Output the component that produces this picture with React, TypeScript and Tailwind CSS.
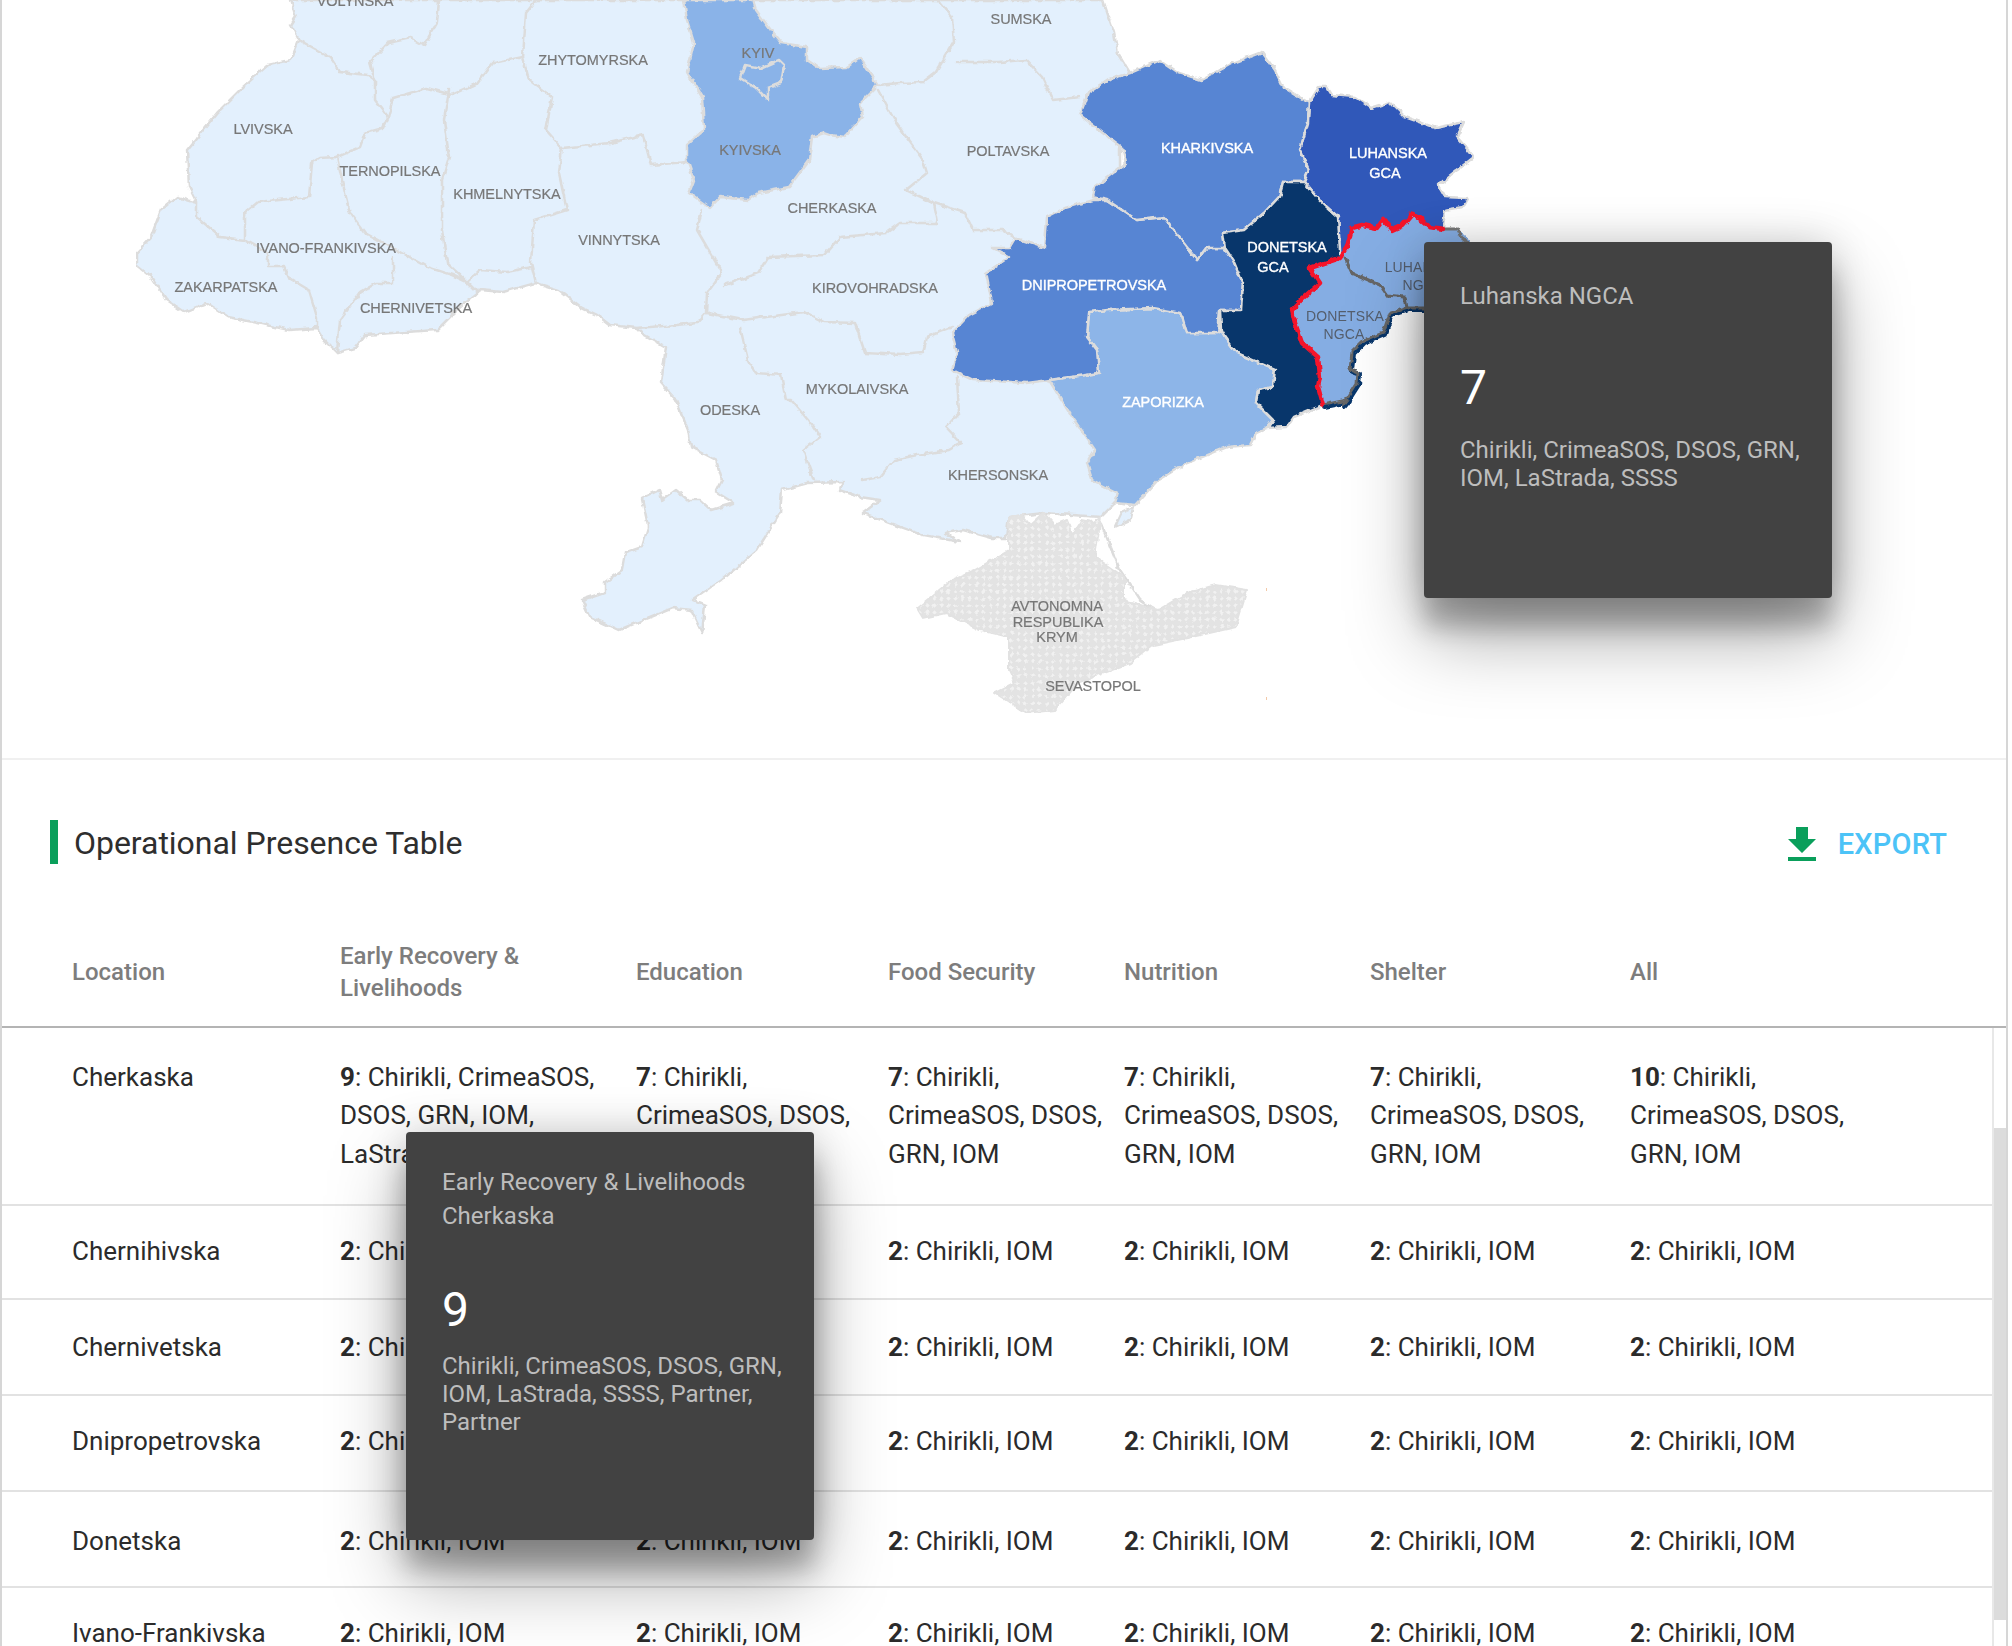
const LIGHT = "#e3f0fd";
const LINE = "#dcdcdc";

const base =
  "291,0 296,17 291,25 299,40 291,60 268,65 243,87 217,113 187,150 189,187 197,203 177,197 161,210 151,237 136,253 136,265 151,277 166,300 184,312 207,303 228,317 258,323 289,330 317,328 324,340 337,353 355,348 365,335 406,332 437,330 452,315 470,298 480,290 503,292 536,283 559,290 582,308 597,315 610,325 636,328 641,333 666,347 661,383 676,400 688,430 691,447 716,460 722,480 716,492 734,503 711,510 700,500 688,500 676,490 662,500 659,490 642,498 648,527 642,547 625,553 622,570 605,582 605,592 582,600 590,617 619,630 636,623 673,608 691,610 702,633 705,605 693,600 722,580 757,550 780,513 782,490 808,483 843,482 840,490 860,497 880,500 863,513 900,527 923,535 960,542 945,533 963,530 992,538 1006,538 1009,517 1044,513 1101,517 1115,503 1135,505 1120,400 1120,150 1130,73 1118,53 1114,33 1103,0";

const borders = [
  "299,40 330,57 340,72 368,75 375,80 375,100 388,117 383,128 365,133 360,147 337,157 319,158 312,163 309,197 258,202 245,213 245,240 220,237 197,217 197,203",
  "439,0 437,23 424,45 411,38 388,43 370,62 375,80",
  "536,0 526,13 523,57 493,63 478,83 452,95 427,88 393,98 388,117",
  "449,90 444,120 449,157 442,180 442,230 447,263 467,282",
  "523,57 529,80 552,97 546,130 562,148 559,173 567,210 534,220 531,263 536,283",
  "531,267 507,272 480,270 467,282 478,293",
  "562,148 610,143 643,135 651,165 687,162",
  "337,157 345,193 350,213 365,233 396,250 427,267 452,275 467,282",
  "245,240 268,253 268,267 284,267 289,278 309,290 317,317 317,328",
  "393,257 393,283 376,283 360,293 340,320 337,353",
  "702,210 697,230 722,273 707,293 706,313 697,323 677,325 636,328",
  "725,285 758,273 768,257 824,255 840,237 886,233 900,223 938,223",
  "707,313 743,320 804,312 824,322 855,323 865,353 900,355 923,353 927,337 952,327",
  "740,327 748,360 756,373 781,375 786,400 791,400 808,420 820,437 803,450 814,480",
  "957,377 959,413 946,427 961,443 949,450 917,455 894,460 880,477 863,480",
  "938,0 952,17 954,42 936,72 923,82 900,83 878,85",
  "957,62 999,62 1026,60 1042,77 1053,100 1080,97",
  "878,90 896,123 923,160 927,173 906,190 934,203 965,213 973,230 1003,230 1015,238",
  "934,203 938,223",
];

const kyivska =
  "684,0 687,20 694,43 687,72 702,97 704,130 687,145 687,160 694,180 689,193 710,208 720,197 748,200 758,193 789,187 809,160 812,137 824,133 830,135 845,137 863,117 860,103 878,85 860,58 847,67 819,68 807,60 807,47 781,43 773,33 756,10 753,0";
const kyivCity = "740,78 745,65 761,68 779,60 784,65 781,83 768,88 768,100 756,88";
const kharkiv =
  "1130,73 1160,60 1179,73 1202,80 1233,63 1262,52 1275,70 1283,87 1309,103 1308,123 1300,150 1309,170 1304,182 1283,182 1279,197 1264,213 1244,230 1223,233 1225,248 1206,248 1197,260 1179,237 1164,217 1137,220 1107,200 1093,197 1095,187 1126,163 1122,147 1103,133 1080,115 1088,93 1107,80";
const dnipro =
  "1093,200 1065,208 1047,217 1045,248 1015,238 1009,248 992,248 1009,257 986,273 992,303 969,315 952,333 957,353 952,370 973,380 1026,383 1049,380 1099,373 1097,350 1087,337 1089,312 1107,310 1153,308 1181,313 1187,333 1218,333 1220,310 1241,310 1243,283 1233,260 1225,248 1206,248 1197,260 1179,237 1164,217 1137,220 1107,200";
const zaporizka =
  "1089,312 1107,310 1153,308 1181,313 1187,333 1218,333 1221,330 1225,337 1237,353 1275,370 1273,387 1258,390 1256,403 1273,420 1267,428 1256,433 1250,445 1227,447 1187,463 1158,480 1135,505 1115,503 1118,493 1092,480 1087,463 1095,450 1072,417 1049,380 1099,373 1097,350 1087,337";
const donetskGca =
  "1283,182 1304,182 1319,200 1338,217 1340,250 1340,258 1310,268 1320,283 1303,298 1292,310 1295,323 1302,343 1318,357 1320,377 1318,387 1323,405 1294,417 1287,427 1267,428 1273,420 1256,403 1258,390 1273,387 1275,370 1237,353 1225,337 1221,330 1220,310 1241,310 1243,283 1233,260 1225,248 1223,233 1244,230 1264,213 1279,197";
const luhanskGca =
  "1309,103 1319,87 1327,87 1332,95 1355,97 1371,108 1390,102 1405,117 1436,128 1464,122 1457,137 1474,157 1438,185 1445,197 1468,198 1463,207 1445,210 1443,229 1430,227 1413,213 1403,225 1392,230 1383,220 1377,228 1363,225 1352,228 1347,247 1340,258 1338,217 1319,200 1304,182 1309,170 1300,150 1308,123";
const redLine =
  "1443,229 1430,227 1413,213 1403,225 1392,230 1383,220 1377,228 1363,225 1352,228 1347,247 1340,258 1310,268 1320,283 1303,298 1292,310 1295,323 1302,343 1318,357 1320,377 1318,387 1323,405";
const donetskNgca =
  "1340,258 1310,268 1320,283 1303,298 1292,310 1295,323 1302,343 1318,357 1320,377 1318,387 1323,405 1347,400 1343,405 1357,383 1358,373 1350,370 1352,352 1362,342 1383,333 1390,313 1407,308 1405,297 1387,295 1380,285 1352,273 1345,258";
const donetskNgcaEdge =
  "1323,405 1347,400 1343,405 1357,383 1358,373 1350,370 1352,352 1362,342 1383,333 1390,313 1407,308 1430,308";
const luhanskNgca =
  "1443,229 1430,227 1413,213 1403,225 1392,230 1383,220 1377,228 1363,225 1352,228 1347,247 1340,258 1345,258 1352,273 1380,285 1387,295 1405,297 1407,308 1440,306 1470,290 1470,240 1457,229";
const crimea =
  "1009,517 1022,515 1030,525 1044,512 1055,525 1067,520 1072,535 1082,520 1092,522 1101,517 1095,557 1124,577 1124,600 1158,610 1187,593 1216,585 1247,590 1236,627 1187,638 1153,645 1130,663 1078,683 1055,710 1026,713 995,693 1015,683 1009,670 1009,637 980,630 946,613 923,618 917,608 952,580 975,570 1009,550";

const grayLabels: [string, number, number][] = [
  ["VOLYNSKA", 355, 1], ["ZHYTOMYRSKA", 593, 60], ["KYIV", 758, 53], ["LVIVSKA", 263, 129], ["KYIVSKA", 750, 150],
  ["TERNOPILSKA", 390, 171], ["KHMELNYTSKA", 507, 194], ["CHERKASKA", 832, 208], ["VINNYTSKA", 619, 240],
  ["IVANO-FRANKIVSKA", 326, 248], ["ZAKARPATSKA", 226, 287], ["CHERNIVETSKA", 416, 308], ["KIROVOHRADSKA", 875, 288],
  ["MYKOLAIVSKA", 857, 389], ["SUMSKA", 1021, 19], ["POLTAVSKA", 1008, 151], ["ODESKA", 730, 410], ["KHERSONSKA", 998, 475],
  ["AVTONOMNA", 1057, 606], ["RESPUBLIKA", 1058, 622], ["KRYM", 1057, 637], ["SEVASTOPOL", 1093, 686],
];
const whiteLabels: [string, number, number][] = [
  ["KHARKIVSKA", 1207, 148], ["LUHANSKA", 1388, 153], ["GCA", 1385, 173], ["DONETSKA", 1287, 247], ["GCA", 1273, 267],
  ["DNIPROPETROVSKA", 1094, 285], ["ZAPORIZKA", 1163, 402],
];
const ngcaLabels: [string, number, number][] = [
  ["DONETSKA", 1345, 316], ["NGCA", 1344, 334], ["LUHANSKA", 1423, 267], ["NGCA", 1423, 285],
];

function MapDrawing() {
  return (
    <svg viewBox="2 0 2004 758" className="block w-[2004px] h-[758px] font-['Liberation_Sans',sans-serif]">
      <defs>
        <filter id="rough" x="0" y="0" width="1" height="1" filterUnits="objectBoundingBox" colorInterpolationFilters="sRGB">
          <feTurbulence type="fractalNoise" baseFrequency="0.14" numOctaves="2" seed="4" result="n" />
          <feDisplacementMap in="SourceGraphic" in2="n" scale="5" xChannelSelector="R" yChannelSelector="G" />
          <feGaussianBlur stdDeviation="0.45" />
        </filter>
        <filter id="soft">
          <feGaussianBlur stdDeviation="0.3" />
        </filter>
        <pattern id="hatch" width="7" height="7" patternUnits="userSpaceOnUse">
          <rect width="7" height="7" fill="#e3e3e3" />
          <path d="M3.5 1.2 5.8 3.5 3.5 5.8 1.2 3.5Z" fill="#f1f1f1" />
        </pattern>
      </defs>
      <g filter="url(#rough)" strokeLinejoin="round" strokeLinecap="round">
        <polygon points={base} fill={LIGHT} stroke={LINE} strokeWidth="2.5" />
        <polygon points="1115,527 1122,512 1133,507 1130,520" fill={LIGHT} stroke={LINE} strokeWidth="2" />
        <polyline points="1101,523 1120,570 1140,600 1158,612" fill="none" stroke={LINE} strokeWidth="2.5" />
        {borders.map((b, i) => (
          <polyline key={i} points={b} fill="none" stroke={LINE} strokeWidth="2.5" />
        ))}
        <polygon points={crimea} fill="url(#hatch)" stroke="#e2e2e2" strokeWidth="2" />
        <polygon points={kyivska} fill="#8ab3e8" stroke={LINE} strokeWidth="2.5" />
        <polygon points={kyivCity} fill="none" stroke={LINE} strokeWidth="2.5" />
        <polygon points={zaporizka} fill="#8db5e8" stroke={LINE} strokeWidth="2.5" />
        <polygon points={dnipro} fill="#5785d3" stroke={LINE} strokeWidth="2.5" />
        <polygon points={kharkiv} fill="#5785d3" stroke={LINE} strokeWidth="2.5" />
        <polygon points={luhanskGca} fill="#3058b9" stroke={LINE} strokeWidth="2.5" />
        <polygon points={donetskGca} fill="#08366b" stroke={LINE} strokeWidth="2.5" />
        <polygon points={donetskNgca} fill="#85ade3" />
        <polygon points={luhanskNgca} fill="#85ade3" />
        <polyline points={donetskNgcaEdge} fill="none" stroke="#08366b" strokeWidth="5" transform="translate(1.5,1.5)" />
        <polyline points="1345,258 1352,273 1380,285 1387,295 1405,297 1407,308" fill="none" stroke="#666" strokeWidth="3" />
        <polyline points={donetskNgcaEdge} fill="none" stroke="#666" strokeWidth="3" />
        <polyline points="1443,229 1457,229 1463,240 1470,245" fill="none" stroke="#777" strokeWidth="3" />
        <polyline points={redLine} fill="none" stroke="#f5142a" strokeWidth="4.5" />
      </g>
      <g filter="url(#soft)" textAnchor="middle" dominantBaseline="central" fontSize="14.5" letterSpacing="-0.05">
        {grayLabels.map(([t, x, y], i) => (
          <text key={i} x={x} y={y} fill="#777777" stroke="#777777" strokeWidth="0.2">{t}</text>
        ))}
        {whiteLabels.map(([t, x, y], i) => (
          <text key={i} x={x} y={y} fill="#ffffff" stroke="#ffffff" strokeWidth="0.35">{t}</text>
        ))}
        {ngcaLabels.map(([t, x, y], i) => (
          <text key={i} x={x} y={y} fill="#555f6e" fontSize="14" letterSpacing="0.15">{t}</text>
        ))}
      </g>
      <rect x="1266" y="588" width="1" height="3" fill="#f3c9a8" />
      <rect x="1266" y="697" width="1" height="3" fill="#f3c9a8" />
    </svg>
  );
}

const COLS = [
  "w-[338px] pl-[70px] pr-4",
  "w-[296px] pr-[24px]",
  "w-[252px] pr-[20px]",
  "w-[236px] pr-[12px]",
  "w-[246px] pr-[20px]",
  "w-[260px] pr-[20px]",
  "w-[362px] pr-[120px]",
];
const HEADERS = ["Location", "Early Recovery & Livelihoods", "Education", "Food Security", "Nutrition", "Shelter", "All"];
const SIMPLE = "Chirikli, IOM";
const ROWS = [
  {
    name: "Cherkaska",
    row: "h-[178px]",
    pt: "pt-[30px]",
    cells: [
      ["9", "Chirikli, CrimeaSOS, DSOS, GRN, IOM, LaStrada, SSSS"],
      ["7", "Chirikli, CrimeaSOS, DSOS, GRN, IOM"],
      ["7", "Chirikli, CrimeaSOS, DSOS, GRN, IOM"],
      ["7", "Chirikli, CrimeaSOS, DSOS, GRN, IOM"],
      ["7", "Chirikli, CrimeaSOS, DSOS, GRN, IOM"],
      ["10", "Chirikli, CrimeaSOS, DSOS, GRN, IOM"],
    ],
  },
  { name: "Chernihivska", row: "h-[94px]", pt: "pt-[26px]" },
  { name: "Chernivetska", row: "h-[96px]", pt: "pt-[28px]" },
  { name: "Dnipropetrovska", row: "h-[96px]", pt: "pt-[26px]" },
  { name: "Donetska", row: "h-[96px]", pt: "pt-[30px]" },
  { name: "Ivano-Frankivska", row: "h-[96px]", pt: "pt-[26px]" },
];

function Tooltip({
  className,
  title,
  value,
  valueClass,
  listClass,
  list,
}: {
  className: string;
  title: string[];
  value: string;
  valueClass: string;
  listClass: string;
  list: string;
}) {
  return (
    <div
      className={
        "absolute z-10 w-[408px] rounded-[4px] bg-[#424242] pl-9 pr-6 text-[#bdbdbd] shadow-[0_38px_76px_rgba(0,0,0,0.34),0_30px_24px_rgba(0,0,0,0.22),0_0_40px_rgba(0,0,0,0.16)] " +
        className
      }
    >
      {title.map((t) => (
        <div key={t} className="text-[24px] leading-[34px]">{t}</div>
      ))}
      <div className={"text-[48px] leading-[56px] text-white " + valueClass}>{value}</div>
      <div className={"text-[24px] leading-[28px] " + listClass}>{list}</div>
    </div>
  );
}

export default function App() {
  return (
    <div className="relative h-[1646px] w-[2012px] overflow-hidden bg-white font-['Roboto',sans-serif]">
      <div className="h-[1646px] w-[2008px] border-x-2 border-[#d6d6d6]">
        <div className="border-b-2 border-[#f0f0f0]">
          <MapDrawing />
        </div>

        <div className="flex items-center justify-between pl-[48px] pr-[59px] pt-[60px]">
          <div className="flex h-[44px] items-center gap-[16px]">
            <div className="h-[44px] w-[8px] bg-[#0a9f5b]" />
            <h2 className="pt-[2px] text-[32px] leading-[44px] tracking-[-0.03px] text-[#2e2e2e]">Operational Presence Table</h2>
          </div>
          <div className="flex h-[44px] items-center gap-[12px] pt-[5px]">
            <svg viewBox="0 0 24 24" className="h-[48px] w-[48px]" fill="#0a9f5b">
              <path d="M19 9h-4V3H9v6H5l7 7 7-7zM5 18v2h14v-2H5z" />
            </svg>
            <span className="text-[29px] font-medium tracking-[0.2px] text-[#4cc3f7]">EXPORT</span>
          </div>
        </div>

        <div className="mt-[53px] border-b-2 border-[#b4b4b4]">
          <table className="w-[1990px] table-fixed border-collapse">
            <thead>
              <tr className="h-[109px]">
                {HEADERS.map((h, i) => (
                  <th key={h} className={"text-left align-middle text-[24px] font-medium leading-[32px] text-[#7d7d7d] " + COLS[i]}>
                    {h}
                  </th>
                ))}
              </tr>
            </thead>
          </table>
        </div>

        <div className="flex">
          <table className="w-[1990px] table-fixed border-separate border-spacing-0 self-start">
            <tbody>
              {ROWS.map((r) => (
                <tr key={r.name} className={r.row}>
                  <td className={"border-b-2 border-[#e2e2e2] align-top text-[26px] leading-[38.4px] text-[#2b2b2b] " + COLS[0] + " " + r.pt}>
                    {r.name}
                  </td>
                  {COLS.slice(1).map((c, i) => {
                    const cell = r.cells ? r.cells[i] : ["2", SIMPLE];
                    return (
                      <td key={i} className={"border-b-2 border-[#e2e2e2] align-top text-[26px] leading-[38.4px] text-[#2b2b2b] " + c + " " + r.pt}>
                        <b className="font-bold">{cell[0]}</b>: {cell[1]}
                      </td>
                    );
                  })}
                </tr>
              ))}
            </tbody>
          </table>
          <div className="w-[14px] border-l-2 border-[#e8e8e8]">
            <div className="h-[100px]" />
            <div className="h-[492px] bg-[#dcdcdc]" />
          </div>
        </div>
      </div>

      <Tooltip
        className="left-[1424px] top-[242px] h-[356px] pt-[37px]"
        title={["Luhanska NGCA"]}
        value="7"
        valueClass="mt-[47px]"
        listClass="mt-[20px]"
        list="Chirikli, CrimeaSOS, DSOS, GRN, IOM, LaStrada, SSSS"
      />
      <Tooltip
        className="left-[406px] top-[1132px] h-[408px] pt-[33px]"
        title={["Early Recovery & Livelihoods", "Cherkaska"]}
        value="9"
        valueClass="mt-[49px]"
        listClass="mt-[14px]"
        list="Chirikli, CrimeaSOS, DSOS, GRN, IOM, LaStrada, SSSS, Partner, Partner"
      />
    </div>
  );
}
